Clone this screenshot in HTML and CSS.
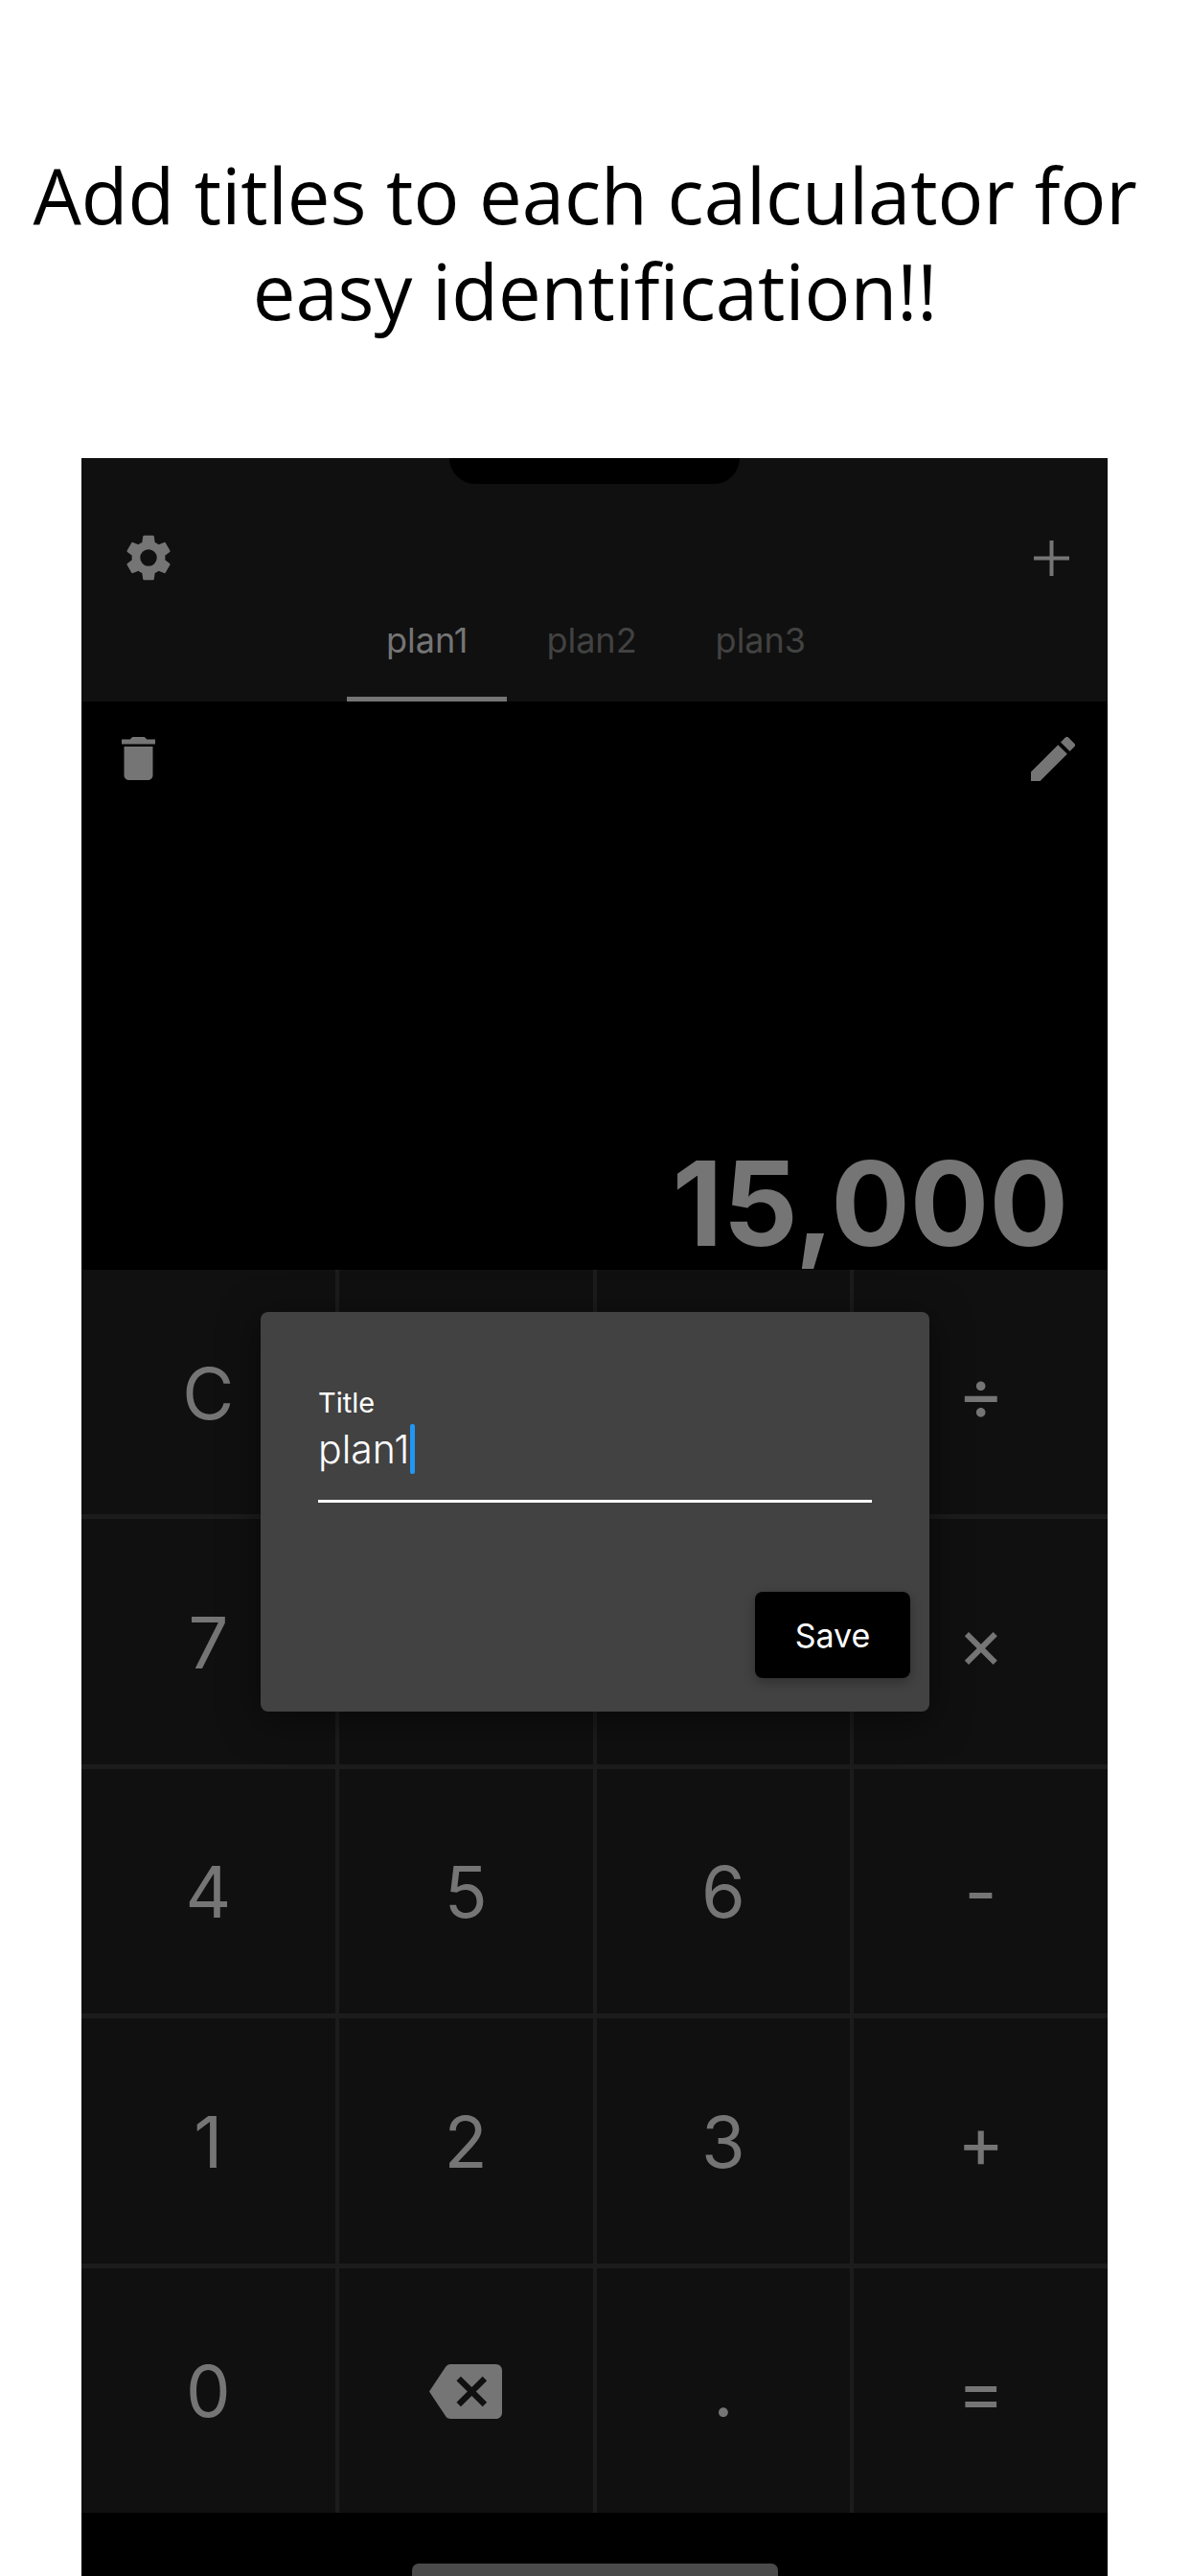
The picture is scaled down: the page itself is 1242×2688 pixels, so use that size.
FILE: index.html
```html
<!DOCTYPE html>
<html lang="en">
<head>
  <meta charset="UTF-8" />
  <title>Calculator titles</title>
  <link rel="stylesheet" href="styles.css">
</head>
<body>
  <h1 class="headline">Add titles to each calculator for&nbsp;<br>easy identification!!</h1>

  <div class="phone">
    <div class="notch"></div>

    <div class="topbar">
      <div class="topbar-icons">
        <svg class="icon-gear" viewBox="0 0 24 24"><path d="M19.14 12.94c.04-.3.06-.61.06-.94 0-.32-.02-.64-.07-.94l2.03-1.58a.49.49 0 0 0 .12-.61l-1.92-3.32a.488.488 0 0 0-.59-.22l-2.39.96c-.5-.38-1.03-.7-1.62-.94l-.36-2.54a.484.484 0 0 0-.48-.41h-3.84c-.24 0-.43.17-.47.41l-.36 2.54c-.59.24-1.13.57-1.62.94l-2.39-.96c-.22-.08-.47 0-.59.22L2.74 8.87c-.12.21-.08.47.12.61l2.03 1.58c-.05.3-.09.63-.09.94s.02.64.07.94l-2.03 1.58a.49.49 0 0 0-.12.61l1.92 3.32c.12.22.37.29.59.22l2.39-.96c.5.38 1.03.7 1.62.94l.36 2.54c.05.24.24.41.48.41h3.84c.24 0 .44-.17.47-.41l.36-2.54c.59-.24 1.13-.56 1.62-.94l2.39.96c.22.08.47 0 .59-.22l1.92-3.32c.12-.22.07-.47-.12-.61l-2.01-1.58zM12 15.6A3.6 3.6 0 1 1 12 8.4a3.6 3.6 0 0 1 0 7.2z"/></svg>
        <svg class="icon-plus" viewBox="0 0 37 37"><path d="M16.500 0h4v16.500H37v4H20.500V37h-4V20.500H0v-4h16.500z"/></svg>
      </div>
      <div class="tabs">
        <div class="tab tab-active">plan1</div>
        <div class="tab">plan2</div>
        <div class="tab">plan3</div>
      </div>
    </div>

    <div class="display">
      <div class="display-icons">
        <svg class="icon-trash" viewBox="5 3 14 18"><path d="M6 19c0 1.100.9 2 2 2h8c1.100 0 2-.9 2-2V7H6v12zM19 4h-3.500l-1-1h-5l-1 1H5v2h14V4z"/></svg>
        <svg class="icon-edit" viewBox="3 3 18 18"><path d="M3 17.250V21h3.750L17.810 9.940l-3.750-3.750L3 17.250zM20.710 7.040a1 1 0 0 0 0-1.410l-2.340-2.340a1 1 0 0 0-1.410 0l-1.830 1.830 3.750 3.750 1.830-1.830z"/></svg>
      </div>
      <div class="total">15,000</div>
    </div>

    <div class="keypad">
      <div class="key">C</div>
      <div class="key"></div>
      <div class="key"></div>
      <div class="key">÷</div>
      <div class="key">7</div>
      <div class="key"></div>
      <div class="key"></div>
      <div class="key">×</div>
      <div class="key">4</div>
      <div class="key">5</div>
      <div class="key">6</div>
      <div class="key">-</div>
      <div class="key">1</div>
      <div class="key">2</div>
      <div class="key">3</div>
      <div class="key">+</div>
      <div class="key">0</div>
      <div class="key">
        <svg class="icon-back" viewBox="0 3 24 18"><path d="M22 3H7c-.690 0-1.230.350-1.590.880L0 12l5.410 8.110c.360.530.900.890 1.590.890h15c1.100 0 2-.9 2-2V5c0-1.100-.9-2-2-2zm-3 12.590L17.590 17 14 13.410 10.410 17 9 15.590 12.590 12 9 8.410 10.410 7 14 10.590 17.590 7 19 8.410 15.410 12 19 15.590z"/></svg>
      </div>
      <div class="key">.</div>
      <div class="key">=</div>
    </div>

    <div class="home-area"><div class="home-bar"></div></div>

    <div class="dialog">
      <div class="field">
        <label class="field-label">Title</label>
        <div class="field-value">plan1<span class="caret"></span></div>
      </div>
      <div class="dialog-actions">
        <button class="save-btn" type="button">Save</button>
      </div>
    </div>
  </div>
</body>
</html>
```

FILE: styles.css
```css
html, body {
  margin: 0;
  height: 2688px;
  overflow: hidden;
  background-color: #fff;
}

body {
  font-family: Inter, "Liberation Sans", sans-serif;
}

.headline {
  margin: 0;
  height: 478px;
  padding-top: 153px;
  box-sizing: border-box;
  font-family: "Open Sans", "Noto Sans", sans-serif;
  font-size: 79.6px;
  font-weight: 400;
  line-height: 100px;
  text-align: center;
  color: #000;
}

.phone {
  position: relative;
  width: 1071px;
  height: 2210px;
  margin-left: 85px;
  background-color: #000;
  display: flex;
  flex-direction: column;
}

.notch {
  position: absolute;
  top: 0;
  left: 384px;
  width: 303px;
  height: 27px;
  background-color: #000;
  border-radius: 0 0 34px 34px;
}

.topbar {
  height: 254px;
  background-color: #101010;
  display: flex;
  flex-direction: column;
  justify-content: flex-end;
}

.topbar-icons {
  display: flex;
  justify-content: space-between;
  align-items: center;
  padding: 0 40px 0 41px;
  margin-bottom: 21px;
}

.icon-gear {
  width: 58px;
  height: 58px;
  fill: #757575;
}

.icon-plus {
  width: 37px;
  height: 37px;
  fill: #757575;
}

.tabs {
  display: flex;
  justify-content: center;
  padding-left: 3px;
}

.tab {
  height: 100px;
  box-sizing: border-box;
  padding: 14px 41px 0;
  font-size: 36px;
  line-height: 44px;
  text-align: center;
  color: #424242;
  border-bottom: 5px solid transparent;
}

.tab-active {
  color: #757575;
  border-bottom-color: #757575;
}

.display {
  height: 593px;
  box-sizing: border-box;
  padding: 37px 0 0 42px;
  display: flex;
  flex-direction: column;
  justify-content: space-between;
}

.display-icons {
  display: flex;
  justify-content: space-between;
  align-items: flex-start;
  padding-right: 34px;
}

.icon-trash {
  width: 35px;
  height: 45px;
  fill: #757575;
}

.icon-edit {
  width: 46px;
  height: 46px;
  fill: #757575;
}

.total {
  padding-right: 41px;
  font-size: 122.5px;
  font-weight: 700;
  line-height: 138px;
  text-align: right;
  color: #757575;
}

.keypad {
  height: 1297px;
  display: grid;
  grid-template-columns: repeat(4, 1fr);
  grid-template-rows: repeat(5, 1fr);
  gap: 5px 4px;
  background-color: #1c1c1c;
}

.key {
  display: flex;
  align-items: center;
  justify-content: center;
  padding-top: 2px;
  background-color: #101010;
  font-size: 74px;
  font-weight: 400;
  color: #757575;
}

.icon-back {
  width: 76px;
  height: 57px;
  fill: #757575;
}

.home-area {
  flex: 1;
  display: flex;
  align-items: flex-end;
  justify-content: center;
}

.home-bar {
  width: 382px;
  height: 13px;
  background-color: #4a4a4a;
  border-radius: 7px 7px 0 0;
}

.dialog {
  position: absolute;
  top: 891px;
  left: 187px;
  width: 698px;
  height: 417px;
  box-sizing: border-box;
  padding: 0 20px 35px 60px;
  background-color: #424242;
  border-radius: 8px;
  box-shadow: 0 8px 40px rgba(0, 0, 0, 0.5);
  display: flex;
  flex-direction: column;
  justify-content: space-between;
}

.field {
  margin-right: 40px;
  padding-top: 78px;
  height: 199px;
  box-sizing: border-box;
  border-bottom: 3px solid #fff;
}

.field-label {
  display: block;
  font-size: 29px;
  line-height: 34px;
  color: #fff;
}

.field-value {
  display: flex;
  align-items: center;
  margin-top: 3px;
  font-size: 41px;
  font-weight: 300;
  line-height: 56px;
  color: #fff;
}

.caret {
  width: 5px;
  height: 52px;
  margin-left: 1px;
  background-color: #2196f3;
  border-radius: 2px;
}

.dialog-actions {
  display: flex;
  justify-content: flex-end;
}

.save-btn {
  width: 162px;
  height: 90px;
  border: none;
  border-radius: 8px;
  background-color: #000;
  color: #fff;
  font-family: Inter, sans-serif;
  font-size: 34px;
  box-shadow: 0 4px 12px rgba(0, 0, 0, 0.3);
}
```
